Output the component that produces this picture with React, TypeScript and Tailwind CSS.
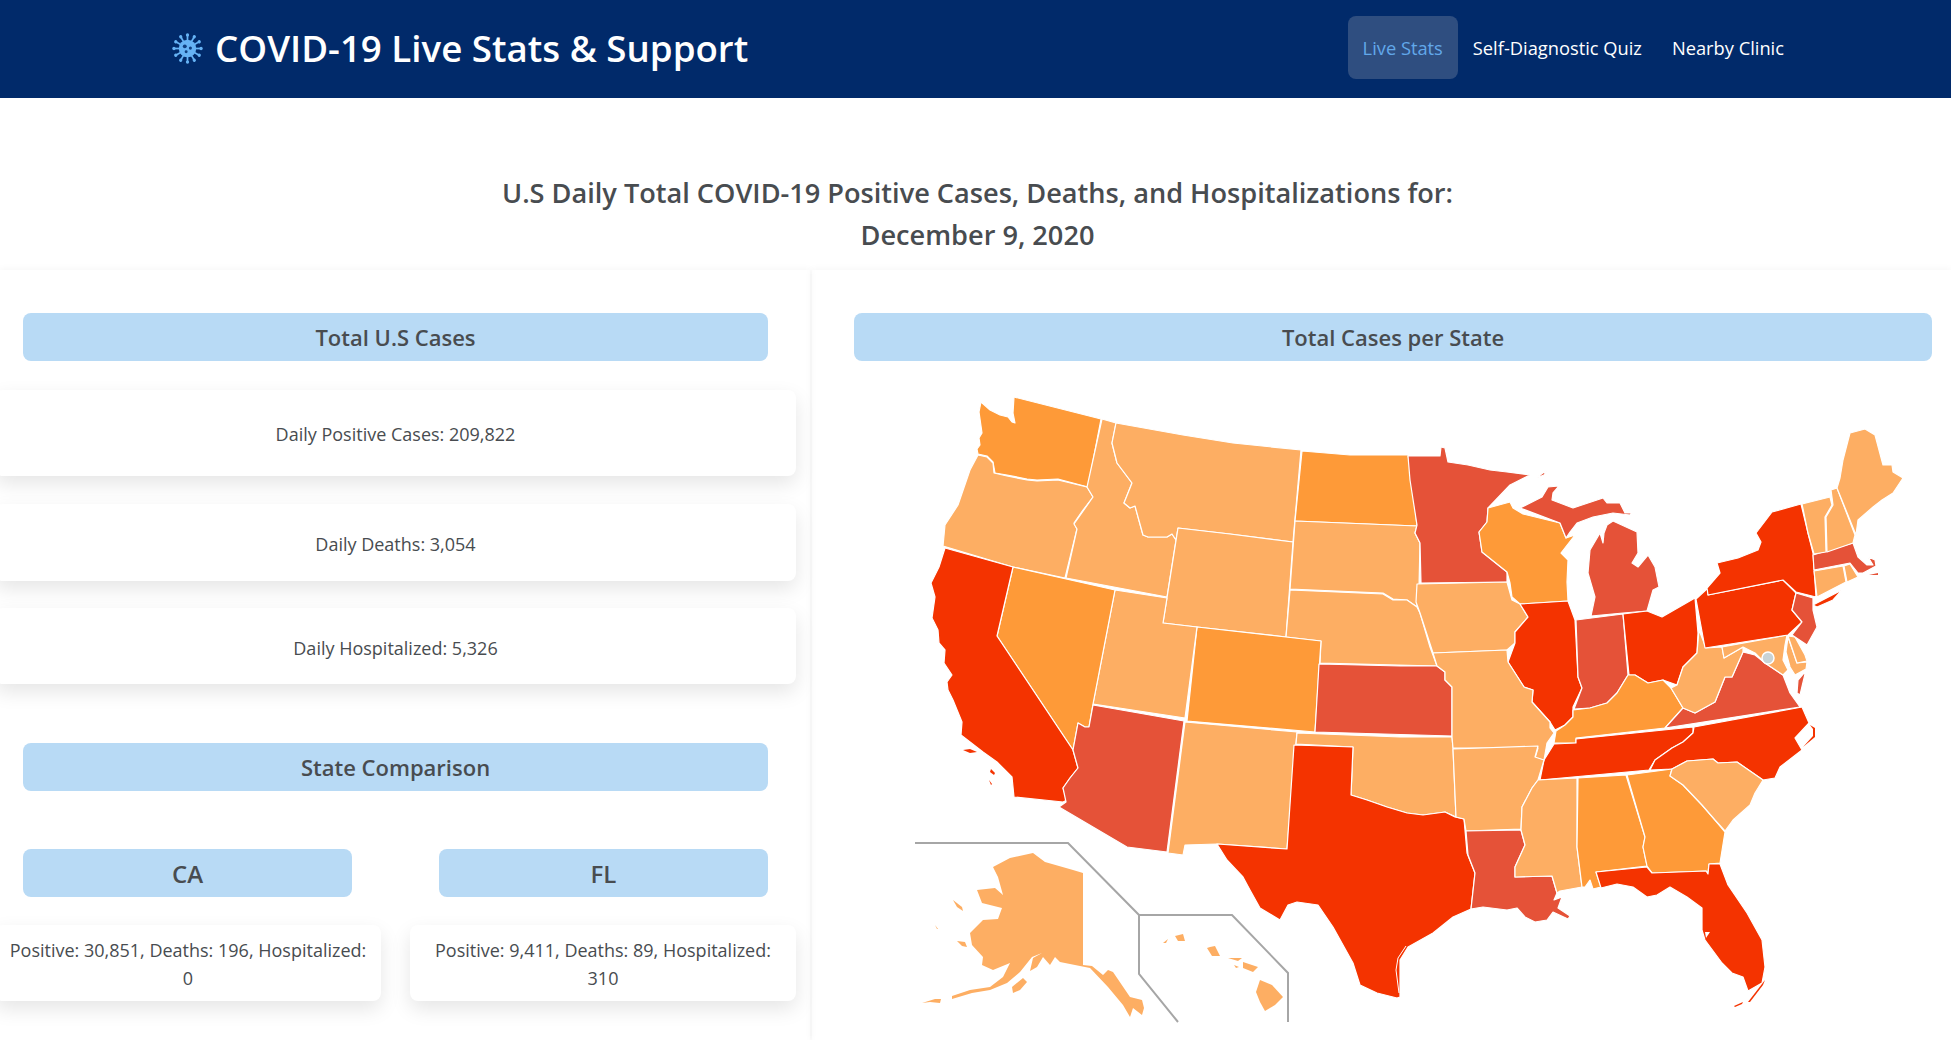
import React from 'react';

const LIGHT = '#fdae63';
const MID = '#fe9a38';
const RED = '#e55238';
const HOT = '#f43300';

const states: [string, string, string][] = [
  ['WA', MID, '1014,397 1101,419 1088,487 1058,479 1037,480 1027,479 1007,475 995,473 993,462 987,456 978,454 977,449 980,445 979,438 982,433 979,412 981,402 990,410 1000,415 1008,417 1012,422 1015,423 1013,413'],
  ['OR', LIGHT, '978,455 987,457 993,463 994,473 1007,476 1027,480 1037,481 1058,480 1087,487 1093,497 1083,510 1074,523 1077,529 1065,578 1013,567 943,546 945,525 958,505 970,470'],
  ['ID', LIGHT, '1102,419 1116,423 1112,443 1117,463 1132,483 1124,503 1130,508 1135,506 1143,535 1148,537 1167,537 1172,534 1176,540 1167,597 1066,578 1077,529 1074,524 1093,497 1087,487'],
  ['MT', LIGHT, '1116,423 1183,435 1233,443 1301,450 1293,542 1230,534 1178,528 1176,540 1172,534 1167,537 1148,537 1143,535 1135,506 1130,508 1124,503 1132,483 1117,463 1112,443'],
  ['WY', LIGHT, '1178,528 1230,534 1293,542 1286,637 1197,627 1163,623'],
  ['ND', MID, '1302,451 1350,455 1408,455 1412,480 1417,526 1295,521'],
  ['SD', LIGHT, '1295,521 1417,526 1415,533 1420,543 1419,587 1417,590 1417,607 1407,600 1393,599 1383,593 1290,589'],
  ['NE', LIGHT, '1290,590 1383,594 1393,600 1407,600 1417,607 1420,613 1430,647 1437,666 1320,663 1321,641 1286,637'],
  ['CO', MID, '1197,627 1286,637 1321,641 1315,732 1187,721'],
  ['UT', LIGHT, '1115,590 1167,598 1163,623 1197,627 1185,718 1093,704'],
  ['NV', MID, '1013,567 1115,590 1093,704 1089,727 1085,727 1078,723 1073,750 997,636'],
  ['CA', HOT, '945,548 1013,567 997,636 1073,750 1078,768 1070,778 1063,788 1067,800 1063,802 1014,797 1012,777 997,762 983,752 961,735 962,722 953,700 948,690 947,682 952,675 944,663 945,650 939,643 938,630 932,618 935,597 931,583 939,567'],
  ['AZ', RED, '1093,705 1184,721 1167,852 1127,847 1059,807 1066,802 1063,788 1070,778 1078,768 1073,750 1078,723 1085,727 1089,727'],
  ['NM', LIGHT, '1185,722 1297,732 1287,849 1217,844 1185,845 1183,855 1168,853'],
  ['OK', LIGHT, '1297,733 1400,737 1452,737 1453,748 1456,817 1445,812 1423,815 1407,813 1387,807 1367,800 1351,795 1353,747 1296,744'],
  ['TX', HOT, '1294,745 1353,747 1351,795 1367,800 1387,807 1407,813 1423,815 1445,812 1455,817 1464,819 1467,853 1475,873 1471,909 1453,917 1433,933 1408,947 1400,960 1400,997 1397,998 1377,993 1360,985 1353,963 1333,927 1318,905 1297,902 1288,905 1280,920 1260,908 1250,890 1243,877 1227,860 1217,844 1287,849'],
  ['KS', RED, '1319,664 1400,666 1437,666 1445,672 1445,680 1452,687 1452,736 1315,732'],
  ['MN', RED, '1408,456 1440,456 1441,447 1445,448 1448,462 1468,465 1490,470 1507,472 1530,475 1510,485 1488,508 1487,522 1479,532 1482,552 1507,572 1507,582 1421,583 1420,543 1415,533 1417,525 1410,480'],
  ['WI', MID, '1488,508 1510,502 1513,508 1523,514 1560,523 1566,538 1575,535 1561,553 1568,560 1567,582 1568,601 1520,604 1512,597 1510,583 1507,572 1482,552 1479,532 1487,522'],
  ['MIU', RED, '1520,508 1542,497 1548,487 1559,486 1553,493 1552,500 1573,508 1603,498 1607,503 1620,503 1625,513 1632,513 1630,515 1613,513 1593,517 1577,523 1570,532 1566,538 1560,523'],
  ['MII', RED, '1536,478 1547,470 1544,475'],
  ['MIL', RED, '1607,525 1613,521 1637,532 1638,553 1632,563 1638,567 1648,555 1655,567 1659,587 1653,590 1647,611 1623,613 1591,616 1595,597 1588,573 1590,550 1600,533 1603,543 1604,533'],
  ['IA', LIGHT, '1417,584 1507,582 1512,600 1520,604 1528,617 1515,632 1515,643 1507,650 1433,653 1420,613 1416,602'],
  ['IL', HOT, '1520,604 1568,601 1575,620 1578,677 1582,688 1573,707 1573,717 1565,725 1555,730 1550,722 1532,702 1533,690 1524,687 1508,662 1515,643 1515,632 1528,617'],
  ['IN', RED, '1576,620 1623,614 1628,675 1617,693 1607,703 1590,708 1574,709 1582,688 1578,677'],
  ['OH', HOT, '1623,614 1647,611 1662,617 1695,598 1698,633 1697,653 1683,667 1677,685 1663,680 1648,683 1635,675 1629,675'],
  ['KY', MID, '1573,710 1590,708 1607,703 1617,693 1628,675 1635,675 1648,683 1663,680 1671,688 1683,708 1665,728 1576,738 1576,743 1554,743 1556,731 1565,725 1573,717'],
  ['TN', HOT, '1554,744 1576,743 1576,739 1693,727 1693,733 1683,742 1672,748 1655,760 1649,770 1540,780 1544,760'],
  ['NC', HOT, '1694,727 1802,707 1809,723 1795,738 1802,750 1780,767 1775,778 1763,780 1737,762 1718,763 1713,759 1687,761 1672,769 1650,770 1655,760 1672,748 1683,742 1693,733'],
  ['VA', RED, '1665,728 1683,708 1695,713 1715,702 1725,677 1732,677 1743,652 1755,655 1765,663 1783,675 1790,693 1800,707'],
  ['WV', LIGHT, '1671,688 1677,685 1683,667 1697,653 1699,630 1706,648 1722,647 1724,658 1743,647 1743,652 1732,677 1725,677 1715,702 1695,713 1683,708'],
  ['MD', LIGHT, '1722,647 1787,635 1785,645 1783,660 1788,670 1783,675 1765,663 1755,653 1743,647 1724,658'],
  ['MDE', LIGHT, '1786,652 1788,637 1797,663 1807,662 1806,669 1795,675 1790,667'],
  ['DE', LIGHT, '1788,636 1795,637 1805,655 1807,661 1797,663'],
  ['VAE', RED, '1797,693 1798,680 1804,673 1805,674 1800,695'],
  ['PA', HOT, '1708,595 1783,580 1796,593 1792,610 1802,622 1788,635 1705,648 1696,599 1708,588'],
  ['NY', HOT, '1717,563 1738,558 1758,550 1761,542 1756,533 1772,512 1801,504 1808,533 1813,553 1816,597 1796,592 1783,580 1708,595 1707,588 1720,573'],
  ['LI', HOT, '1813,605 1842,590 1833,600 1817,607'],
  ['NJ', RED, '1796,593 1813,598 1813,610 1817,627 1807,645 1792,635 1802,622 1792,610'],
  ['CT', LIGHT, '1814,571 1843,566 1846,582 1817,597'],
  ['RI', LIGHT, '1844,566 1850,564 1858,577 1847,582'],
  ['MA', RED, '1813,555 1853,543 1858,557 1867,565 1873,565 1868,557 1875,560 1876,566 1863,573 1858,573 1850,563 1814,570'],
  ['VT', LIGHT, '1802,504 1830,497 1832,505 1825,517 1826,552 1814,554 1808,533'],
  ['NH', LIGHT, '1831,490 1837,488 1855,535 1853,543 1827,552 1826,517 1833,505'],
  ['ME', LIGHT, '1837,488 1840,478 1843,460 1850,433 1865,429 1875,435 1883,465 1892,465 1893,472 1903,478 1893,493 1882,500 1873,507 1858,520 1856,535'],
  ['MO', LIGHT, '1433,653 1507,650 1508,662 1524,687 1533,690 1532,702 1550,722 1550,728 1554,733 1547,743 1544,760 1535,758 1538,748 1453,748 1452,737 1452,687 1445,680 1445,672 1437,666'],
  ['AR', LIGHT, '1453,749 1538,746 1535,757 1544,760 1538,780 1532,788 1522,807 1521,829 1466,831 1464,819 1456,817'],
  ['LA', RED, '1466,831 1521,830 1525,845 1515,867 1515,877 1552,876 1557,893 1554,900 1562,897 1558,908 1570,916 1568,919 1553,912 1547,920 1535,922 1525,917 1517,908 1507,910 1483,907 1471,909 1475,873 1468,855'],
  ['MS', LIGHT, '1538,780 1577,778 1577,847 1582,887 1560,891 1557,893 1552,876 1515,877 1515,867 1525,845 1521,830 1522,807 1532,788'],
  ['AL', MID, '1578,778 1626,775 1645,837 1643,847 1647,866 1596,872 1601,887 1593,889 1590,880 1585,887 1582,887 1577,847'],
  ['GA', MID, '1627,775 1672,769 1670,776 1683,785 1702,805 1715,820 1725,832 1720,863 1709,864 1708,873 1706,871 1652,873 1647,866 1643,847 1645,837'],
  ['SC', LIGHT, '1672,769 1687,761 1713,759 1718,763 1737,762 1763,780 1755,793 1750,805 1733,820 1725,831 1715,820 1702,805 1683,785 1670,776'],
  ['FL', HOT, '1596,872 1647,867 1652,873 1706,871 1708,874 1709,864 1720,864 1728,885 1747,913 1762,940 1765,967 1762,983 1748,991 1743,977 1732,973 1722,963 1705,940 1702,930 1702,908 1687,897 1670,887 1657,895 1647,897 1633,887 1617,884 1601,888'],
];

// no outline on these, they are small or sit off the mainland
const islands: [string, string][] = [
  [HOT, '963,750 970,749 977,752 970,753'],
  [HOT, '991,769 995,773 994,775 990,772'],
  [HOT, '989,780 992,784 991,785'],
  [HOT, '1734,1006 1743,1002 1742,1004 1735,1007'],
  [HOT, '1748,1002 1765,980 1763,985 1750,1002'],
  [HOT, '1810,725 1815,728 1815,737 1803,747 1813,736 1813,729'],
  [RED, '1869,575 1878,573 1878,575'],
  [LIGHT, '993,867 1010,858 1033,853 1045,862 1073,870 1083,873 1083,965 1092,966 1103,975 1108,970 1113,972 1130,997 1142,1000 1144,1008 1142,1015 1133,1008 1130,1017 1123,1005 1108,987 1090,968 1060,962 1055,957 1050,965 1043,957 1037,967 1030,971 1033,958 1042,953 1032,957 1020,972 1007,983 990,990 972,993 952,999 952,996 970,990 990,987 1003,977 1010,963 993,970 982,965 983,957 972,945 970,933 983,920 998,919 1002,908 982,903 977,890 995,888 1003,895 998,877'],
  [LIGHT, '1012,987 1023,978 1027,982 1020,990 1013,993'],
  [LIGHT, '922,1003 935,999 941,999 940,1003 930,1002'],
  [LIGHT, '953,900 962,907 963,911 957,907'],
  [LIGHT, '957,941 965,942 967,947 962,946'],
  [LIGHT, '935,925 938,929 937,929'],
  [LIGHT, '1260,980 1272,985 1283,997 1275,1005 1265,1011 1260,1002 1256,992'],
  [LIGHT, '1243,962 1258,967 1253,972 1243,968'],
  [LIGHT, '1228,958 1242,958 1238,961'],
  [LIGHT, '1234,965 1239,967 1236,968'],
  [LIGHT, '1210,947 1215,946 1220,956 1212,956 1207,948'],
  [LIGHT, '1175,936 1183,934 1185,941 1178,941'],
  [LIGHT, '1163,943 1168,939 1166,943'],
  ['#fff', '1705,932 1710,932 1706,938'],
];

function UsMap() {
  return (
    <svg viewBox="900 380 1020 660" className="block w-[1020px] h-[660px] ml-[46px] mt-[19px]">
      {states.map(([name, fill, points]) => (
        <polygon key={name} points={points} fill={fill} stroke="#fff" strokeWidth="1.2" strokeLinejoin="round" />
      ))}
      {islands.map(([fill, points], i) => (
        <polygon key={i} points={points} fill={fill} />
      ))}
      <polyline points="1406,946 1398,958 1396,970 1399,993" fill="none" stroke="#fff" strokeWidth="1" />
      <circle cx="1768" cy="658" r="6" fill="#c9d3d6" stroke="#fff" strokeWidth="1.5" />
      <polyline points="915,843 1068,843 1139,915 1139,974 1178,1022" fill="none" stroke="#a6a6a6" strokeWidth="2" />
      <polyline points="1139,915 1232,915 1288,973 1288,1022" fill="none" stroke="#a6a6a6" strokeWidth="2" />
    </svg>
  );
}

function VirusIcon() {
  const angles = [0, 30, 60, 90, 120, 150, 180, 210, 240, 270, 300, 330];
  return (
    <svg viewBox="0 0 32 32" className="w-[31px] h-[31px] shrink-0">
      {angles.map((a) => (
        <g key={a} transform={`rotate(${a} 16 16)`}>
          <line x1="16" y1="2" x2="16" y2="9" stroke="#66b3f5" strokeWidth="1.8" />
          <circle cx="16" cy="2" r="1.7" fill="#66b3f5" />
        </g>
      ))}
      <circle cx="16" cy="16" r="9" fill="#66b3f5" />
      <circle cx="13.2" cy="13.8" r="2" fill="#0f3f80" />
      <circle cx="19" cy="15.6" r="1.6" fill="#0f3f80" />
      <circle cx="14.6" cy="19.4" r="1.5" fill="#0f3f80" />
    </svg>
  );
}

function Bar({ big, children }: { big?: boolean; children: React.ReactNode }) {
  return (
    <div className={`h-12 pt-[1px] flex items-center justify-center bg-[#b8daf5] rounded-lg font-semibold text-[#484c50] ${big ? 'text-[24px]' : 'text-[22px]'}`}>
      {children}
    </div>
  );
}

export default function App() {
  return (
    <div className="h-[1040px] overflow-hidden bg-white text-[#484c50] font-['Open_Sans',sans-serif]">
      <nav className="h-[98px] bg-[#012a6a] flex items-center justify-between pl-[172px] pr-[152px]">
        <div className="flex items-center gap-[12px]">
          <VirusIcon />
          <span className="text-[36.7px] font-semibold text-white">COVID-19 Live Stats &amp; Support</span>
        </div>
        <div className="flex items-center h-[63px] mb-[3px] text-[18.3px] text-white">
          <a className="h-full flex items-center px-[15px] rounded-lg bg-[#2f4e80] text-[#62a8ea]">Live Stats</a>
          <a className="h-full flex items-center px-[15px]">Self-Diagnostic Quiz</a>
          <a className="h-full flex items-center px-[15px]">Nearby Clinic</a>
        </div>
      </nav>

      <h1 className="pt-[74px] pb-[14px] pl-[4px] text-center text-[27.15px] leading-[42px] font-semibold">
        U.S Daily Total COVID-19 Positive Cases, Deaths, and Hospitalizations for:
        <br />
        December 9, 2020
      </h1>

      <div className="flex">
        <div className="w-[810px] shrink-0 pt-[43px] pl-[23px] pr-[42px] shadow-[0_0_8px_rgba(0,0,0,0.05)]">
          <Bar>Total U.S Cases</Bar>
          <div className="-mx-[28px] mt-[29px] flex flex-col text-[18px]">
            <div className="h-[86px] pt-[3px] flex items-center justify-center bg-white rounded-lg shadow-[0_8px_20px_rgba(0,0,0,0.1)]">
              Daily Positive Cases: 209,822
            </div>
            <div className="mt-[28px] h-[77px] pt-[3px] flex items-center justify-center bg-white rounded-lg shadow-[0_8px_20px_rgba(0,0,0,0.1)]">
              Daily Deaths: 3,054
            </div>
            <div className="mt-[27px] h-[76px] pt-[4px] flex items-center justify-center bg-white rounded-lg shadow-[0_8px_20px_rgba(0,0,0,0.1)]">
              Daily Hospitalized: 5,326
            </div>
          </div>
          <div className="mt-[59px]">
            <Bar>State Comparison</Bar>
          </div>
          <div className="mt-[58px] grid grid-cols-2 gap-x-[87px]">
            <div>
              <Bar big>CA</Bar>
            </div>
            <div>
              <Bar big>FL</Bar>
            </div>
          </div>
          <div className="-mx-[28px] mt-[28px] grid grid-cols-2 gap-x-[29px] text-[18px] leading-[28px] text-center">
            <div className="h-[76px] px-[10px] pt-[1px] flex items-center justify-center bg-white rounded-lg shadow-[0_8px_20px_rgba(0,0,0,0.1)]">
              Positive: 30,851, Deaths: 196, Hospitalized: 0
            </div>
            <div className="h-[76px] px-[10px] pt-[1px] flex items-center justify-center bg-white rounded-lg shadow-[0_8px_20px_rgba(0,0,0,0.1)]">
              Positive: 9,411, Deaths: 89, Hospitalized: 310
            </div>
          </div>
        </div>

        <div className="flex-1 ml-[2px] pt-[43px] pl-[42px] pr-[19px] shadow-[0_0_8px_rgba(0,0,0,0.05)]">
          <Bar>Total Cases per State</Bar>
          <UsMap />
        </div>
      </div>
    </div>
  );
}
